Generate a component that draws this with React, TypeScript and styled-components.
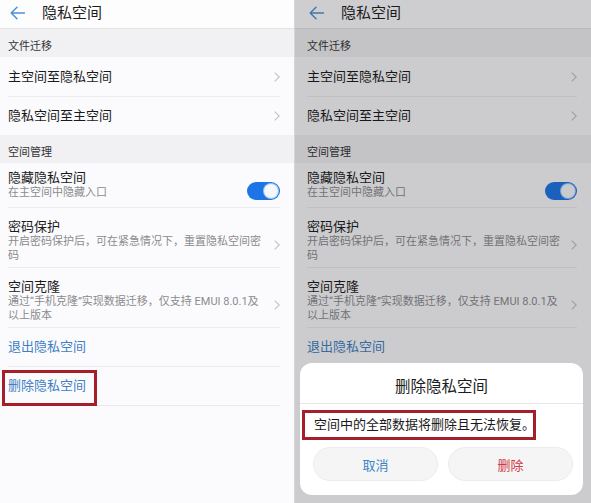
import { FC, ReactNode } from "react";
import styled, { createGlobalStyle } from "styled-components";

const GlobalStyle = createGlobalStyle`
  html, body {
    margin: 0;
    padding: 0;
    background: #ffffff;
  }
  body {
    font-family: Roboto, "Noto Sans CJK SC", "Noto Sans", sans-serif;
    -webkit-font-smoothing: antialiased;
  }
`;

const Page = styled.div`
  width: 591px;
  height: 503px;
  display: grid;
  grid-template-columns: 294px 296px;
  column-gap: 1px;
  background: #d6d6d8;
  overflow: hidden;
`;

const Screen = styled.div<{ $inset: number }>`
  --inset: ${(p) => p.$inset}px;
  position: relative;
  height: 503px;
  background: #fbfbfd;
  overflow: hidden;
`;

const Header = styled.header`
  height: 29px;
  display: flex;
  align-items: center;
  gap: 17px;
  padding: 0 0 3px calc(var(--inset) + 2px);
  box-sizing: border-box;
  background: #fdfdfe;
  border-bottom: 1px solid #e3e3e6;
  box-shadow: 0 1px 2px rgba(0, 0, 0, 0.05);
`;

const Title = styled.h1`
  margin: 0;
  font-size: 15px;
  font-weight: 400;
  color: #1c1c1c;
  line-height: 18px;
`;

const SectionLabel = styled.div<{ $h: number }>`
  height: ${(p) => p.$h}px;
  box-sizing: border-box;
  padding: 11px 0 0 var(--inset);
  background: #f1f1f3;
  font-size: 11px;
  line-height: 14px;
  color: #333333;
`;

const Row = styled.div<{ $h: number; $divider?: boolean; $pad?: string }>`
  height: ${(p) => p.$h}px;
  box-sizing: border-box;
  margin: 0 14px 0 var(--inset);
  padding: ${(p) => p.$pad ?? "0"};
  display: flex;
  align-items: ${(p) => (p.$pad ? "flex-start" : "center")};
  justify-content: space-between;
  border-bottom: 1px solid ${(p) => (p.$divider ? "#ebebee" : "transparent")};
`;

const TextCol = styled.div`
  width: 258px;
  display: flex;
  flex-direction: column;
  white-space: nowrap;
`;

const ItemTitle = styled.div`
  font-size: 13px;
  line-height: 16px;
  color: #1a1a1a;
`;

const ItemSub = styled.div`
  font-size: 11px;
  line-height: 14px;
  color: #8b8b8d;
`;

const LinkText = styled.span<{ $marked?: boolean }>`
  position: relative;
  font-size: 13px;
  line-height: 16px;
  color: #3f80c4;
  &::after {
    content: "";
    display: ${(p) => (p.$marked ? "block" : "none")};
    position: absolute;
    top: -8px;
    bottom: -12px;
    left: -6px;
    right: -11px;
    border: 3px solid #a51f2a;
  }
`;

const ChevronBox = styled.span<{ $offset?: number }>`
  display: flex;
  align-self: center;
  margin-top: ${(p) => p.$offset ?? 0}px;
`;

const Track = styled.span`
  width: 35px;
  height: 18px;
  border-radius: 9px;
  background: #1c74e6;
  display: flex;
  align-items: center;
  justify-content: flex-end;
  padding-right: 2px;
  box-sizing: border-box;
  margin-top: 12px;
`;

const Thumb = styled.span`
  width: 14px;
  height: 14px;
  border-radius: 50%;
  background: #f4f8fd;
  box-shadow: 0 0 0 1px #9cc3f2;
`;

const Overlay = styled.div`
  position: absolute;
  inset: 0;
  background: rgba(20, 20, 24, 0.2);
`;

const Dialog = styled.div`
  position: absolute;
  left: 5px;
  right: 8px;
  bottom: 8px;
  height: 132px;
  background: #ffffff;
  border-radius: 12px;
  display: flex;
  flex-direction: column;
`;

const DialogTitle = styled.div`
  height: 41px;
  display: flex;
  align-items: center;
  justify-content: center;
  padding-top: 4px;
  box-sizing: border-box;
  font-size: 15.5px;
  color: #1c1c1c;
  border-bottom: 1px solid #e6e6e8;
`;

const DialogBody = styled.div`
  height: 43px;
  display: flex;
  align-items: center;
  padding-left: 14px;
  padding-bottom: 2px;
  box-sizing: border-box;
`;

const Message = styled.span`
  position: relative;
  font-size: 13px;
  line-height: 16px;
  color: #1a1a1a;
  &::after {
    content: "";
    position: absolute;
    top: -7px;
    bottom: -7px;
    left: -12px;
    right: -1px;
    border: 3px solid #a51f2a;
  }
`;

const Buttons = styled.div`
  display: grid;
  grid-template-columns: 1fr 1fr;
  gap: 10px;
  padding: 0 10px 0 13px;
`;

const Button = styled.button<{ $tone: "cancel" | "danger" }>`
  height: 34px;
  border-radius: 17px;
  border: 1px solid #ececee;
  background: #f5f5f6;
  font-family: inherit;
  font-size: 13px;
  color: ${(p) => (p.$tone === "cancel" ? "#3b86c6" : "#cf3a43")};
`;

const BackArrow = () => (
  <svg width="15" height="14" viewBox="0 0 15 14" fill="none">
    <path
      d="M14.5 7H1.2M7 1.2L1.2 7L7 12.8"
      stroke="#4b8fd3"
      strokeWidth="1.4"
      strokeLinecap="round"
      strokeLinejoin="round"
    />
  </svg>
);

const Chevron: FC<{ offset?: number }> = ({ offset }) => (
  <ChevronBox $offset={offset}>
    <svg width="6" height="10" viewBox="0 0 6 10" fill="none">
      <path d="M0.7 0.7L5.2 5L0.7 9.3" stroke="#c2c2c4" strokeWidth="1.1" />
    </svg>
  </ChevronBox>
);

const Settings: FC<{ inset: number; marked?: boolean; children?: ReactNode }> = ({
  inset,
  marked,
  children,
}) => (
  <Screen $inset={inset}>
    <Header>
      <BackArrow />
      <Title>隐私空间</Title>
    </Header>
    <SectionLabel $h={28}>文件迁移</SectionLabel>
    <Row $h={40} $divider>
      <ItemTitle>主空间至隐私空间</ItemTitle>
      <Chevron />
    </Row>
    <Row $h={38}>
      <ItemTitle>隐私空间至主空间</ItemTitle>
      <Chevron />
    </Row>
    <SectionLabel $h={28}>空间管理</SectionLabel>
    <Row $h={45} $divider $pad="7px 0 0 0">
      <TextCol>
        <ItemTitle>隐藏隐私空间</ItemTitle>
        <ItemSub>在主空间中隐藏入口</ItemSub>
      </TextCol>
      <Track>
        <Thumb />
      </Track>
    </Row>
    <Row $h={60} $divider $pad="11px 0 0 0">
      <TextCol>
        <ItemTitle>密码保护</ItemTitle>
        <ItemSub>
          开启密码保护后，可在紧急情况下，重置隐私空间密
          <br />码
        </ItemSub>
      </TextCol>
      <Chevron offset={4} />
    </Row>
    <Row $h={60} $divider $pad="11px 0 0 0">
      <TextCol>
        <ItemTitle>空间克隆</ItemTitle>
        <ItemSub>
          通过“手机克隆”实现数据迁移，仅支持 EMUI 8.0.1及
          <br />以上版本
        </ItemSub>
      </TextCol>
      <Chevron offset={4} />
    </Row>
    <Row $h={39} $divider>
      <LinkText>退出隐私空间</LinkText>
    </Row>
    <Row $h={39} $divider>
      <LinkText $marked={marked}>删除隐私空间</LinkText>
    </Row>
    {children}
  </Screen>
);

export default function App() {
  return (
    <>
      <GlobalStyle />
      <Page>
        <Settings inset={8} marked />
        <Settings inset={12}>
          <Overlay />
          <Dialog>
            <DialogTitle>删除隐私空间</DialogTitle>
            <DialogBody>
              <Message>空间中的全部数据将删除且无法恢复。</Message>
            </DialogBody>
            <Buttons>
              <Button $tone="cancel">取消</Button>
              <Button $tone="danger">删除</Button>
            </Buttons>
          </Dialog>
        </Settings>
      </Page>
    </>
  );
}
